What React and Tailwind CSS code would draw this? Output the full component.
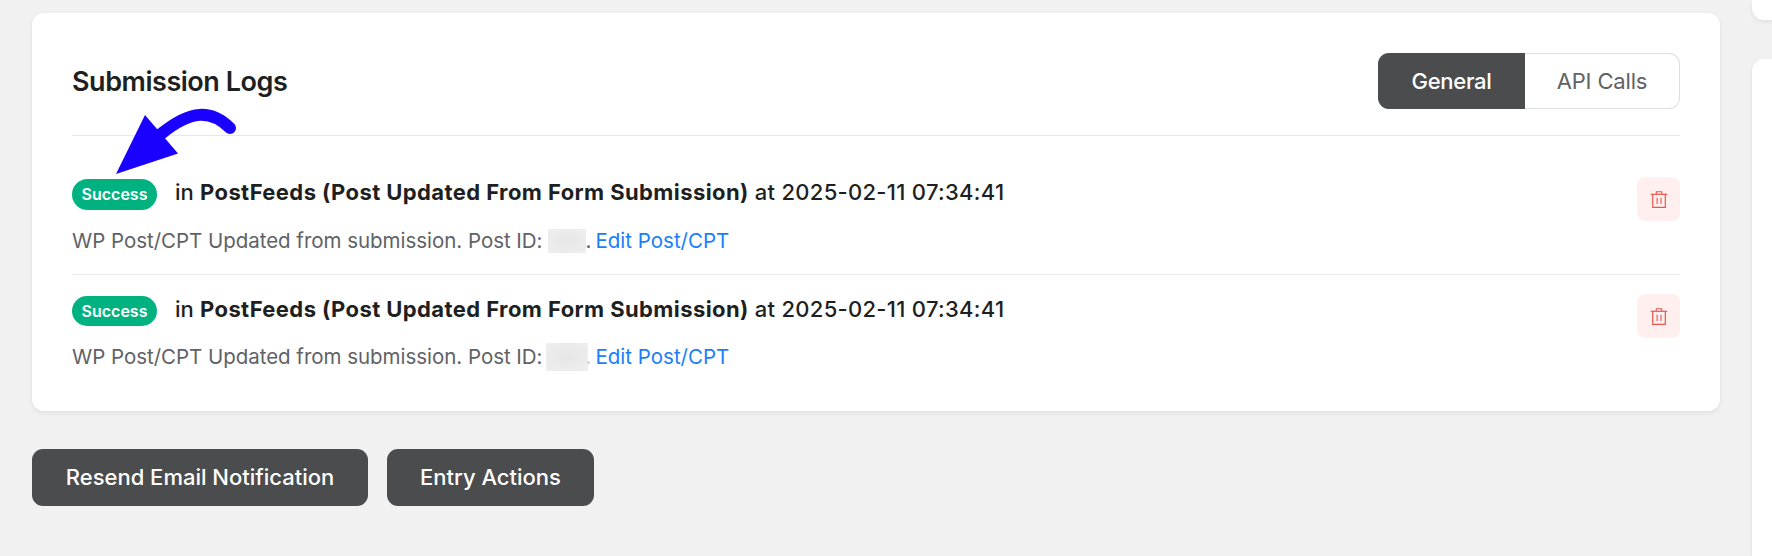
import React, { useState } from "react";

const logs = [
  {
    id: 1,
    status: "Success",
    feed: "PostFeeds (Post Updated From Form Submission)",
    date: "2025-02-11 07:34:41",
    note: "WP Post/CPT Updated from submission. Post ID:",
    badge: "h-[31px]",
    noteGap: "mt-[19px]",
    mask: "ml-[6px] -mr-px h-6 w-[38px]",
    dot: "text-[#606266]",
  },
  {
    id: 2,
    status: "Success",
    feed: "PostFeeds (Post Updated From Form Submission)",
    date: "2025-02-11 07:34:41",
    note: "WP Post/CPT Updated from submission. Post ID:",
    badge: "h-[30px]",
    noteGap: "mt-[18px]",
    mask: "ml-1 -mr-[3px] h-7 w-[42px]",
    dot: "text-[#d0d0d0]",
  },
];

const TrashIcon = () => (
  <svg width="18" height="18" viewBox="0 0 18 18" fill="none" stroke="#e8564f">
    <path d="M.7 4.300h16.600" strokeWidth="1.2" />
    <path d="M6.300 4V1.700h5.400V4" strokeWidth="1.1" />
    <path d="M2.700 4.300v13h12.600v-13" strokeWidth="1.2" />
    <path d="M7.100 7.700v6.300M11 7.700v6.300" strokeWidth="1.1" />
  </svg>
);

const Arrow = () => (
  <svg
    className="pointer-events-none absolute left-[80px] top-[92px]"
    width="130"
    height="75"
    viewBox="112 105 130 75"
  >
    <path
      d="M161 134C191 109.500 211 109.500 230 128"
      fill="none"
      stroke="#1a00ff"
      strokeWidth="12"
      strokeLinecap="round"
    />
    <path d="M145 115L178 153.500L116 174Z" fill="#1a00ff" />
  </svg>
);

const Tabs = () => {
  const [active, setActive] = useState("General");

  const color = (name) =>
    active === name
      ? "border-[#4b4c4d] bg-[#4b4c4d] text-white font-medium"
      : "border-[#dcdfe6] bg-white text-[#606266]";

  return (
    <div className="flex h-14 w-[302px] text-[22px]">
      <button
        onClick={() => setActive("General")}
        className={`w-[147px] rounded-l-[11px] border border-r-0 pr-px tracking-[-0.3px] ${color("General")}`}
      >
        General
      </button>
      <button
        onClick={() => setActive("API Calls")}
        className={`flex-1 rounded-r-[11px] border border-l-0 tracking-[-0.15px] ${color("API Calls")}`}
      >
        API Calls
      </button>
    </div>
  );
};

const LogRow = ({ log }) => (
  <div className="flex h-[117px] items-start justify-between border-b border-[#ececec] pt-[19px] last:border-0">
    <div>
      <div className="flex h-[31px] items-start whitespace-nowrap text-[22px] leading-[31px] text-[#1e1f21]">
        <span
          className={`mt-[2px] flex w-[85px] items-center justify-center rounded-full bg-[#00b27f] text-[16px] font-semibold text-white ${log.badge}`}
        >
          {log.status}
        </span>
        <span className="ml-[18px] w-[25px] font-medium">in</span>
        <b className="font-bold tracking-[0.41px]">{log.feed}</b>
        <span className="ml-[6px] font-medium tracking-[0.29px]">
          at {log.date}
        </span>
      </div>
      <div
        className={`flex h-7 items-center whitespace-nowrap text-[20.5px] leading-7 text-[#606266] ${log.noteGap}`}
      >
        <span className="tracking-[-0.03px]">{log.note}</span>
        <span
          className={`bg-radial from-[#e6e6e6] to-[#efefef] ${log.mask}`}
        />
        <span className={`w-[10px] ${log.dot}`}>.</span>
        <a href="#" className="text-[#1a7efb]">
          Edit Post/CPT
        </a>
      </div>
    </div>
    <button className="flex h-11 w-[43px] items-center justify-center rounded-lg bg-[#ffefee]">
      <TrashIcon />
    </button>
  </div>
);

const App = () => {
  return (
    <div className="flex h-[556px] w-[1772px] gap-8 overflow-hidden bg-[#f1f1f1] pl-8 font-['Inter',sans-serif]">
      <main className="w-[1688px] shrink-0 pt-[13px]">
        <section className="relative h-[398px] rounded-xl bg-white px-10 shadow-[0_2px_5px_rgba(0,0,0,0.07)]">
          <header className="flex h-[123px] items-start justify-between border-b border-[#e8e8e8] pt-10">
            <h1 className="text-[27px] font-semibold leading-[58px] tracking-[-0.46px] text-[#1e1f21]">
              Submission Logs
            </h1>
            <Tabs />
          </header>
          <div className="pt-[22px]">
            {logs.map((log) => (
              <LogRow key={log.id} log={log} />
            ))}
          </div>
          <Arrow />
        </section>
        <div className="mt-[38px] flex gap-[19px] text-[22px] font-medium text-white">
          <button className="h-[57px] w-[336px] rounded-[11px] bg-[#4b4c4d]">
            Resend Email Notification
          </button>
          <button className="h-[57px] w-[207px] rounded-[11px] bg-[#4b4c4d]">
            Entry Actions
          </button>
        </div>
      </main>
      <aside className="flex w-[60px] shrink-0 flex-col gap-[39px]">
        <div className="h-5 rounded-b-xl bg-white shadow-[0_2px_5px_rgba(0,0,0,0.07)]" />
        <div className="flex-1 rounded-tl-xl bg-white shadow-[0_2px_5px_rgba(0,0,0,0.07)]" />
      </aside>
    </div>
  );
};

export default App;
